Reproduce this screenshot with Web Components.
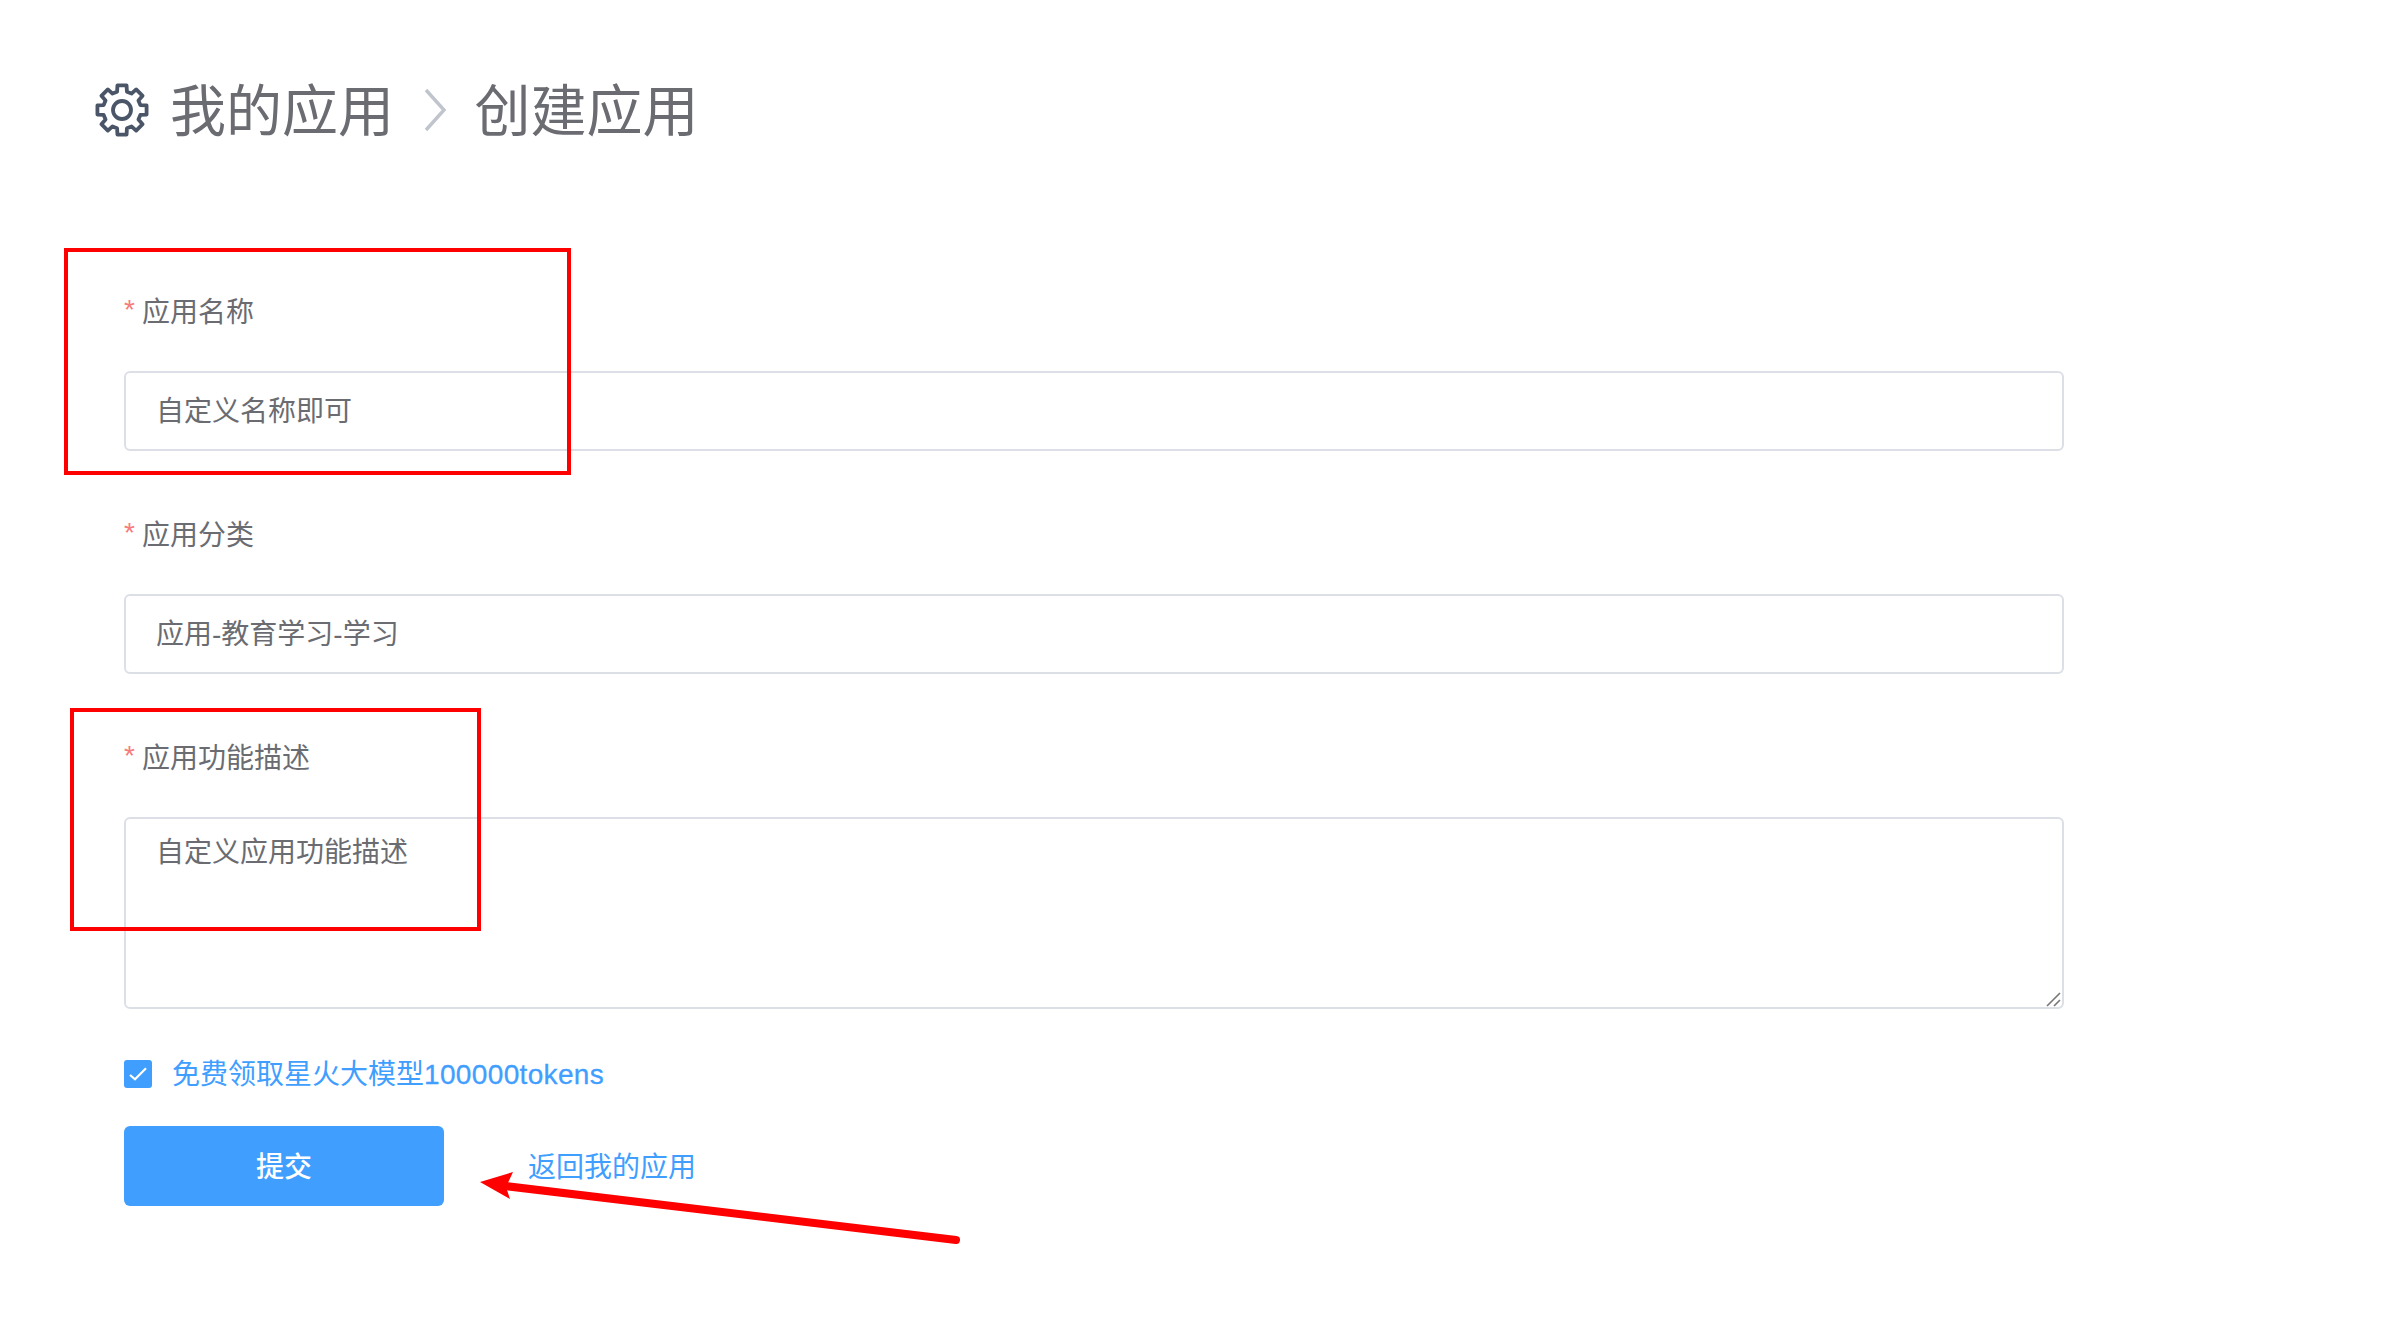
<!DOCTYPE html>
<html lang="zh"><head><meta charset="utf-8">
<style>
html,body{margin:0;padding:0;background:#fff;height:100%}
body{font-family:"Liberation Sans","Noto Sans CJK SC",sans-serif;color:#6a6c71;position:relative;width:2396px;height:1340px;overflow:hidden}
</style></head><body>
<template id="t-head"><style>
:host{display:flex;align-items:center;height:54px;padding:83px 0 0 95px;font-size:56px;line-height:54px;color:#6a6c71}
svg.g{width:54px;height:54px;flex:none;margin-right:21px}
svg.c{width:24px;height:44px;flex:none;margin:0 27.5px 0 29px}
::slotted(span){margin-top:4px}
</style>
<svg class="g" viewBox="0 0 54 54" fill="none" stroke="#4a5568" stroke-width="3.8" stroke-linejoin="round"><circle cx="27" cy="27" r="9"/><path id="gear"/></svg>
<slot name="a"></slot>
<svg class="c" viewBox="0 0 24 44" fill="none" stroke="#c0c4cc" stroke-width="3.4"><path d="M3 2l18 20L3 42"/></svg>
<slot name="b"></slot>
</template>
<template id="t-field"><style>
:host{display:block;width:1940px}
.l{display:flex;align-items:center;box-sizing:border-box;height:40px;padding-top:5px;font-size:28px;line-height:34px;color:#6a6c71}
.s{color:#f67c7c;width:18px;font-family:"Liberation Sans",sans-serif;line-height:28px;position:relative;top:-2.5px}
.b{box-sizing:border-box;border:2px solid #dcdfe6;border-radius:6px;margin-top:41px;height:80px;padding:0 30px 4px;display:flex;align-items:center;font-size:28px}
</style><div class="l"><span class="s">*</span><slot name="label"></slot></div><div class="b"><slot></slot></div></template>
<template id="t-area"><style>
:host{display:block;width:1940px}
.l{display:flex;align-items:center;box-sizing:border-box;height:40px;padding-top:5px;font-size:28px;line-height:34px;color:#6a6c71}
.s{color:#f67c7c;width:18px;font-family:"Liberation Sans",sans-serif;line-height:28px;position:relative;top:-2.5px}
.b{box-sizing:border-box;border:2px solid #dcdfe6;border-radius:6px;margin-top:41px;height:192px;padding:14px 30px;font-size:28px;line-height:40px;position:relative}
svg{position:absolute;right:0;bottom:0;width:18px;height:18px}
</style><div class="l"><span class="s">*</span><slot name="label"></slot></div><div class="b"><slot></slot><svg viewBox="0 0 18 18" stroke="#777" stroke-width="1.6"><path d="M3 17L16 4M10 17l6-6"/></svg></div></template>
<template id="t-check"><style>
:host{display:flex;align-items:center;gap:20px;color:#409eff;font-size:28px;height:40px}
.b{width:28px;height:28px;border-radius:3px;background:#409eff;flex:none}
.t{margin-top:-4px}
svg{display:block}
::slotted(span){letter-spacing:.35px;-webkit-text-stroke:.3px #409eff}
</style><span class="b"><svg width="28" height="28" viewBox="0 0 28 28" fill="none" stroke="#fff" stroke-width="2.2"><path d="M6 15l5 4.3L22 8.3"/></svg></span><span class="t"><slot></slot></span></template>
<template id="t-btn"><style>
:host{display:flex;align-items:center;justify-content:center;box-sizing:border-box;padding-bottom:3px;width:320px;height:80px;background:#409eff;color:#fff;border-radius:6px;font-size:28px;font-weight:500;flex:none}
</style><slot></slot></template>
<template id="t-actions"><style>
:host{display:flex;align-items:center;gap:84px;color:#409eff;font-size:28px}
::slotted(span){margin-top:-3px}
</style><slot></slot></template>
<template id="t-page"><style>
:host{display:block}
.f{display:flex;flex-direction:column;padding:153px 0 0 124px;}
</style><slot name="head"></slot><div class="f"><slot></slot></div></template>
<template id="t-note"><style>
:host{display:block;position:absolute;box-sizing:border-box;border:4px solid #f00}
</style></template>

<app-page>
<app-head slot="head"><span slot="a">我的应用</span><span slot="b">创建应用</span></app-head>
<app-field><span slot="label">应用名称</span>自定义名称即可</app-field>
<app-field style="margin-top:62px"><span slot="label">应用分类</span>应用-教育学习-学习</app-field>
<app-area style="margin-top:62px"><span slot="label">应用功能描述</span>自定义应用功能描述</app-area>
<app-check style="margin-top:45px">免费领取星火大模型<span>100000tokens</span></app-check>
<app-actions style="margin-top:32px"><app-btn>提交</app-btn><span>返回我的应用</span></app-actions>
</app-page>
<app-note style="left:64px;top:248px;width:507px;height:227px"></app-note>
<app-note style="left:70px;top:708px;width:411px;height:223px"></app-note>
<svg style="position:absolute;left:470px;top:1160px" width="510" height="110" viewBox="470 1160 510 110"><path d="M956 1240L505 1186" stroke="#f00" stroke-width="8" stroke-linecap="round"/><path d="M480 1182l33-10-7 15 4 12z" fill="#f00"/></svg>

<script>
const def=(n,t,init)=>customElements.define(n,class extends HTMLElement{constructor(){super();const r=this.attachShadow({mode:"open"});r.append(document.getElementById(t).content.cloneNode(true));if(init)init(r)}});
const gear=r=>{let d="";const P=(a,R)=>{const x=a*Math.PI/180;return (27+R*Math.cos(x)).toFixed(2)+" "+(27+R*Math.sin(x)).toFixed(2)};
for(let i=0;i<8;i++){const c=-90+i*45;d+=(i?"L":"M")+P(c-15,19)+"L"+P(c-10.5,25)+"L"+P(c+10.5,25)+"L"+P(c+15,19)}
r.getElementById("gear").setAttribute("d",d+"Z")};
def("app-head","t-head",gear);def("app-field","t-field");def("app-area","t-area");def("app-check","t-check");def("app-btn","t-btn");def("app-actions","t-actions");def("app-page","t-page");def("app-note","t-note");
</script>
</body></html>
